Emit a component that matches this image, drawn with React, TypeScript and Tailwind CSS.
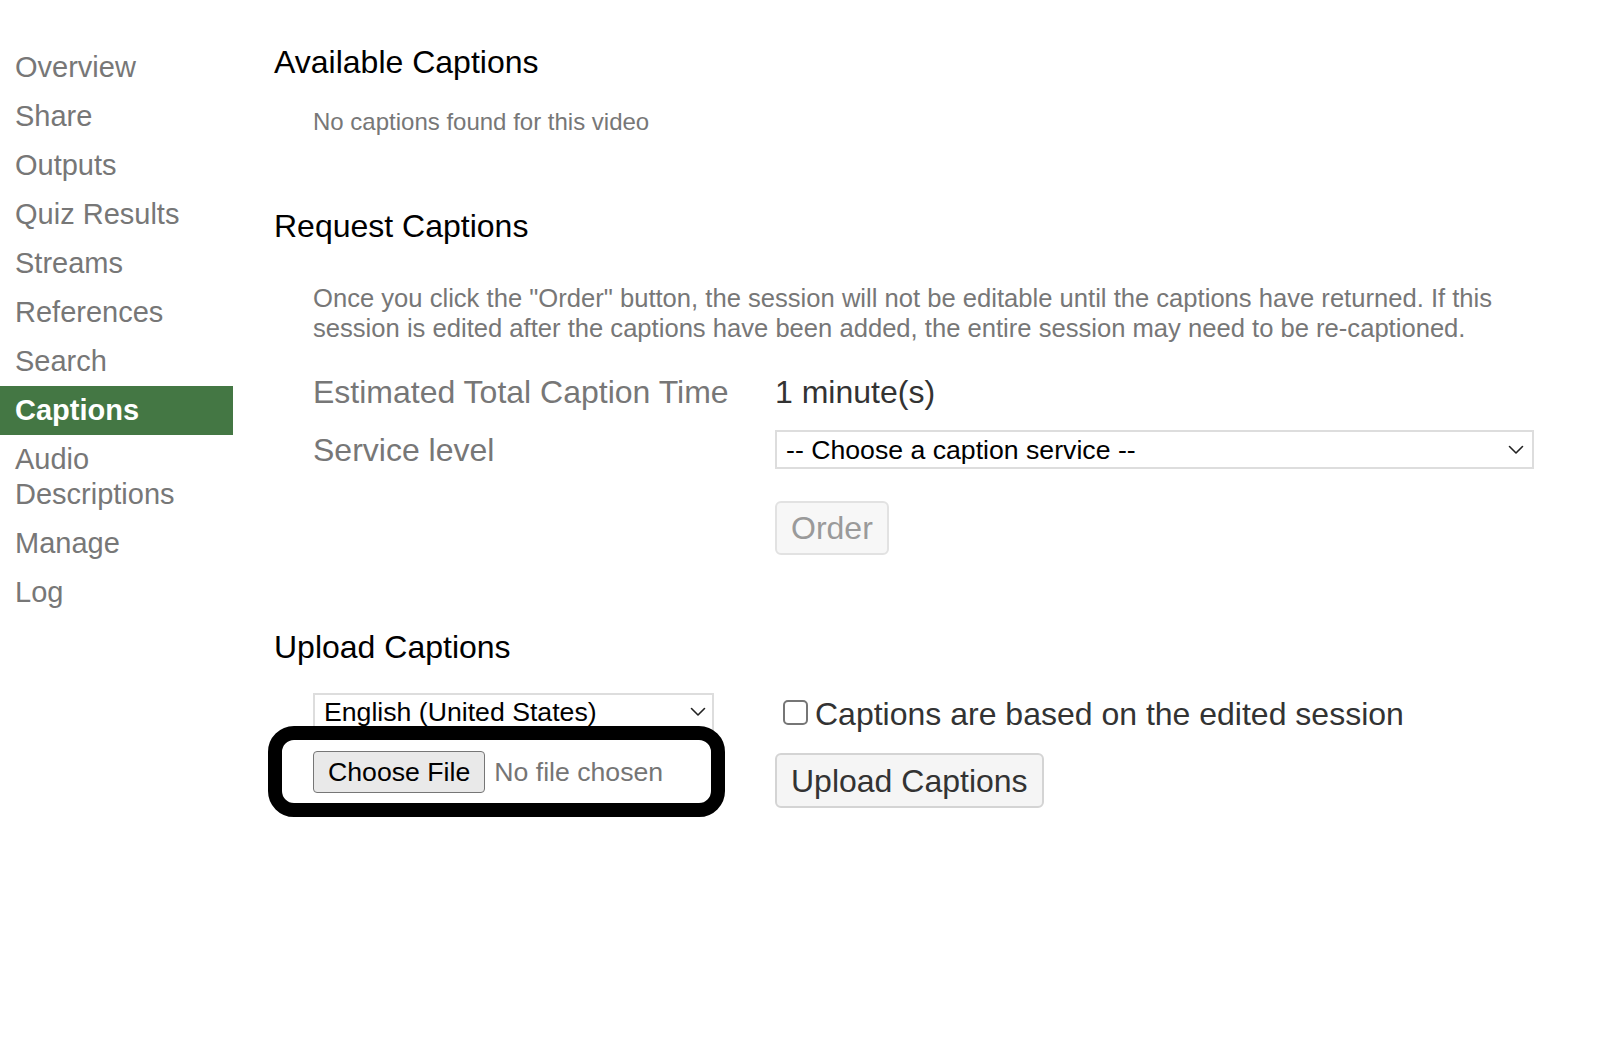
import React from "react";

const navItems = [
  "Overview",
  "Share",
  "Outputs",
  "Quiz Results",
  "Streams",
  "References",
  "Search",
  "Captions",
  "Audio Descriptions",
  "Manage",
  "Log",
];

function Chevron() {
  return (
    <svg width="16" height="10" viewBox="0 0 16 10" fill="none">
      <path d="M1.5 1.5 L8 8 L14.5 1.5" stroke="#222" strokeWidth="1.6" strokeLinecap="round" strokeLinejoin="round" />
    </svg>
  );
}

export default function App() {
  return (
    <div
      className="flex min-h-[1050px] w-full bg-white"
      style={{ fontFamily: "'Liberation Sans', Arial, Helvetica, sans-serif" }}
    >
      {/* Sidebar */}
      <nav className="w-[233px] shrink-0 pt-[43px]">
        {navItems.map((item) => {
          const active = item === "Captions";
          return (
            <div
              key={item}
              className={
                active
                  ? "bg-[#447744] py-[7px] pl-[15px] pr-2 text-[29px] font-bold leading-[35px] text-white"
                  : "py-[7px] pl-[15px] pr-2 text-[29px] leading-[35px] text-[#777777]"
              }
            >
              {item}
            </div>
          );
        })}
      </nav>

      {/* Main */}
      <main className="ml-[41px] flex-1 pt-[42px]">
        <h2 className="text-[32px] leading-[40px] font-normal text-black">Available Captions</h2>
        <p className="mt-[25px] pl-[39px] text-[24px] leading-[30px] text-[#777777]">
          No captions found for this video
        </p>

        <h2 className="mt-[69px] text-[32px] leading-[40px] font-normal text-black">Request Captions</h2>
        <p className="mt-[37px] pl-[39px] text-[25.6px] leading-[30px] text-[#777777]">
          <span className="block whitespace-nowrap">
            Once you click the "Order" button, the session will not be editable until the captions have returned. If this
          </span>
          <span className="block whitespace-nowrap">
            session is edited after the captions have been added, the entire session may need to be re-captioned.
          </span>
        </p>

        <div className="mt-[29px] grid grid-cols-[462px_759px] pl-[39px]">
          <div className="text-[32px] leading-[40px] text-[#777777]">Estimated Total Caption Time</div>
          <div className="text-[32px] leading-[40px] text-[#333333]">1 minute(s)</div>

          <div className="mt-[18px] flex h-[39px] items-center text-[32px] text-[#777777]">Service level</div>
          <div className="mt-[18px] flex h-[39px] items-center justify-between border-2 border-[#dddddd] bg-white pl-[9px] pr-[8px] text-[26.67px] text-black">
            <span>-- Choose a caption service --</span>
            <Chevron />
          </div>

          <div />
          <div className="mt-[32px]">
            <button className="h-[54px] rounded-[6px] border-2 border-[#e2e2e2] bg-[#f7f7f7] px-[14px] text-[32px] text-[#9a9a9a]">
              Order
            </button>
          </div>
        </div>

        <h2 className="mt-[72px] text-[32px] leading-[40px] font-normal text-black">Upload Captions</h2>

        <div className="grid grid-cols-[462px_759px] pl-[39px]">
          <div className="pt-[26px]">
            <div className="flex h-[38px] w-[401px] items-center justify-between border-2 border-[#dddddd] bg-white pl-[9px] pr-[6px] text-[26.67px] text-black">
              <span>English (United States)</span>
              <Chevron />
            </div>
            <div className="relative mt-[20px] flex items-center">
              <button className="h-[42px] rounded-[4px] border-[1.5px] border-[#767676] bg-[#e9e9e9] px-[14px] text-[26.67px] text-black">
                Choose File
              </button>
              <span className="ml-[9px] text-[26.67px] text-[#757575]">No file chosen</span>
              <div className="pointer-events-none absolute left-[-45px] top-[-25px] z-10 h-[91px] w-[457px] rounded-[26px] border-[14px] border-black" />
            </div>
          </div>

          <div className="pt-[27px]">
            <label className="flex h-[40px] items-center text-[32px] text-[#333333]">
              <span className="mr-[7px] ml-[8px] -mt-[3px] h-[25px] w-[25px] rounded-[5px] border-2 border-[#767676] bg-white" />
              Captions are based on the edited session
            </label>
            <button className="mt-[19px] h-[55px] rounded-[6px] border-2 border-[#d4d4d4] bg-[#f5f5f5] px-[14px] text-[32px] text-[#333333]">
              Upload Captions
            </button>
          </div>
        </div>
      </main>
    </div>
  );
}
